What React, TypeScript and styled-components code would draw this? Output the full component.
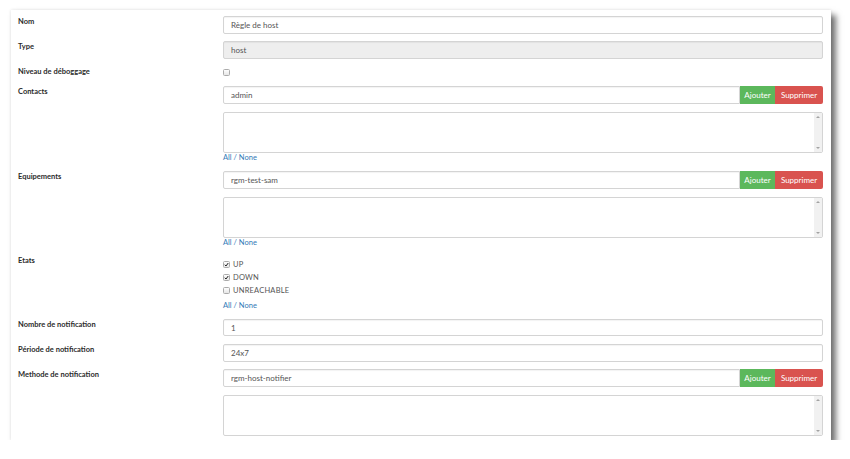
import styled, { createGlobalStyle } from 'styled-components';

const GlobalStyle = createGlobalStyle`
  body {
    margin: 0;
    background: #fff;
    font-family: Lato, "Open Sans", "Liberation Sans", sans-serif;
  }
`;

const Panel = styled.div`
  box-sizing: border-box;
  margin: 10px 0 0 11px;
  width: 820px;
  height: 430px;
  overflow: hidden;
  background: #fff;
  padding: 6px 8px 0 7px;
  display: flex;
  flex-direction: column;
  gap: 7.8px;
  box-shadow: 5px 5px 6px rgba(0, 0, 0, 0.55), 0 0 3px rgba(0, 0, 0, 0.12);
`;

const Row = styled.div<{ $minHeight?: number }>`
  display: grid;
  grid-template-columns: 205px 1fr;
  align-items: start;
  min-height: ${({ $minHeight }) => ($minHeight ? `${$minHeight}px` : 'auto')};
`;

const Label = styled.label<{ $offset?: number }>`
  font-size: 7.5px;
  font-weight: 700;
  color: #2b2b2b;
  line-height: 10px;
  padding-top: ${({ $offset }) => $offset ?? 1}px;
`;

const Field = styled.div`
  display: flex;
  flex-direction: column;
  min-width: 0;
`;

const Input = styled.input<{ $locked?: boolean; $grouped?: boolean }>`
  box-sizing: border-box;
  width: 100%;
  height: 17.5px;
  margin: 0;
  padding: 0 7px;
  border: 1px solid #d4d4d4;
  border-radius: ${({ $grouped }) => ($grouped ? '2px 0 0 2px' : '2px')};
  background: ${({ $locked }) => ($locked ? '#eeeeee' : '#fff')};
  box-shadow: inset 0 1px 1px rgba(0, 0, 0, 0.05);
  font-family: inherit;
  font-size: 8px;
  color: #555;
  outline: none;
`;

const InputGroup = styled.div`
  display: flex;
  height: 17.5px;
`;

const Button = styled.button<{ $tone: 'add' | 'remove'; $width: number }>`
  flex: none;
  width: ${({ $width }) => $width}px;
  height: 100%;
  margin: 0;
  padding: 0;
  border: none;
  border-radius: ${({ $tone }) => ($tone === 'remove' ? '0 2px 2px 0' : '0')};
  background: ${({ $tone }) => ($tone === 'add' ? '#5cb85c' : '#d9534f')};
  color: #fff;
  font-family: inherit;
  font-size: 8px;
`;

const ListBox = styled.div`
  box-sizing: border-box;
  margin-top: 8px;
  height: 41.5px;
  border: 1px solid #d4d4d4;
  border-radius: 2px;
  display: flex;
  justify-content: flex-end;
  overflow: hidden;
`;

const Scrollbar = styled.div`
  width: 8px;
  background: #f1f1f1;
  display: flex;
  flex-direction: column;
  justify-content: space-between;
  align-items: center;
  padding: 3px 0;
`;

const Arrow = styled.span<{ $down?: boolean }>`
  width: 0;
  height: 0;
  border-left: 2px solid transparent;
  border-right: 2px solid transparent;
  ${({ $down }) => ($down ? 'border-top: 2px solid #a3a3a3;' : 'border-bottom: 2px solid #a3a3a3;')}
`;

const Links = styled.div<{ $gap?: number }>`
  margin-top: ${({ $gap }) => $gap ?? 0}px;
  font-size: 7.5px;
  line-height: 10px;
  color: #337ab7;

  a {
    color: inherit;
    text-decoration: none;
  }
`;

const CheckList = styled.div`
  display: flex;
  flex-direction: column;
  padding-top: 2.5px;
`;

const CheckLine = styled.label`
  display: flex;
  align-items: center;
  gap: 3px;
  height: 13px;
  font-size: 7.5px;
  color: #555;
  letter-spacing: 0.2px;
`;

const Box = styled.span<{ $top?: number }>`
  box-sizing: border-box;
  flex: none;
  width: 7px;
  height: 7px;
  margin-top: ${({ $top }) => $top ?? 0}px;
  border: 1px solid #ababab;
  border-radius: 1.5px;
  background: linear-gradient(#fdfdfd, #e6e6e6);
  display: flex;
  align-items: center;
  justify-content: center;
`;

const Check = ({ checked, top }: { checked?: boolean; top?: number }) => (
  <Box $top={top}>
    {checked && (
      <svg width="5" height="5" viewBox="0 0 10 10">
        <path d="M1.5 5.5 L4 8 L8.5 2" fill="none" stroke="#222" strokeWidth="2" />
      </svg>
    )}
  </Box>
);

const AllNone = ({ gap }: { gap?: number }) => (
  <Links $gap={gap}>
    <a href="#">All</a> / <a href="#">None</a>
  </Links>
);

// the last picker is cut by the bottom of the panel, so its links are left out
const Picker = ({ value, links = true }: { value: string; links?: boolean }) => (
  <Field>
    <InputGroup>
      <Input $grouped readOnly value={value} />
      <Button $tone="add" $width={35}>Ajouter</Button>
      <Button $tone="remove" $width={48}>Supprimer</Button>
    </InputGroup>
    <ListBox>
      <Scrollbar>
        <Arrow />
        <Arrow $down />
      </Scrollbar>
    </ListBox>
    {links && <AllNone />}
  </Field>
);

const states = [
  { name: 'UP', checked: true },
  { name: 'DOWN', checked: true },
  { name: 'UNREACHABLE', checked: false },
];

export default function App() {
  return (
    <>
      <GlobalStyle />
      <Panel>
        <Row>
          <Label>Nom</Label>
          <Input readOnly value="Règle de host" />
        </Row>
        <Row>
          <Label>Type</Label>
          <Input $locked readOnly value="host" />
        </Row>
        <Row $minHeight={12}>
          <Label $offset={0}>Niveau de déboggage</Label>
          <Check top={2} />
        </Row>
        <Row>
          <Label>Contacts</Label>
          <Picker value="admin" />
        </Row>
        <Row>
          <Label>Equipements</Label>
          <Picker value="rgm-test-sam" />
        </Row>
        <Row>
          <Label $offset={0}>Etats</Label>
          <Field>
            <CheckList>
              {states.map((s) => (
                <CheckLine key={s.name}>
                  <Check checked={s.checked} />
                  {s.name}
                </CheckLine>
              ))}
            </CheckList>
            <AllNone gap={3.5} />
          </Field>
        </Row>
        <Row>
          <Label>Nombre de notification</Label>
          <Input readOnly value="1" />
        </Row>
        <Row>
          <Label>Période de notification</Label>
          <Input readOnly value="24x7" />
        </Row>
        <Row>
          <Label>Methode de notification</Label>
          <Picker value="rgm-host-notifier" links={false} />
        </Row>
      </Panel>
    </>
  );
}
